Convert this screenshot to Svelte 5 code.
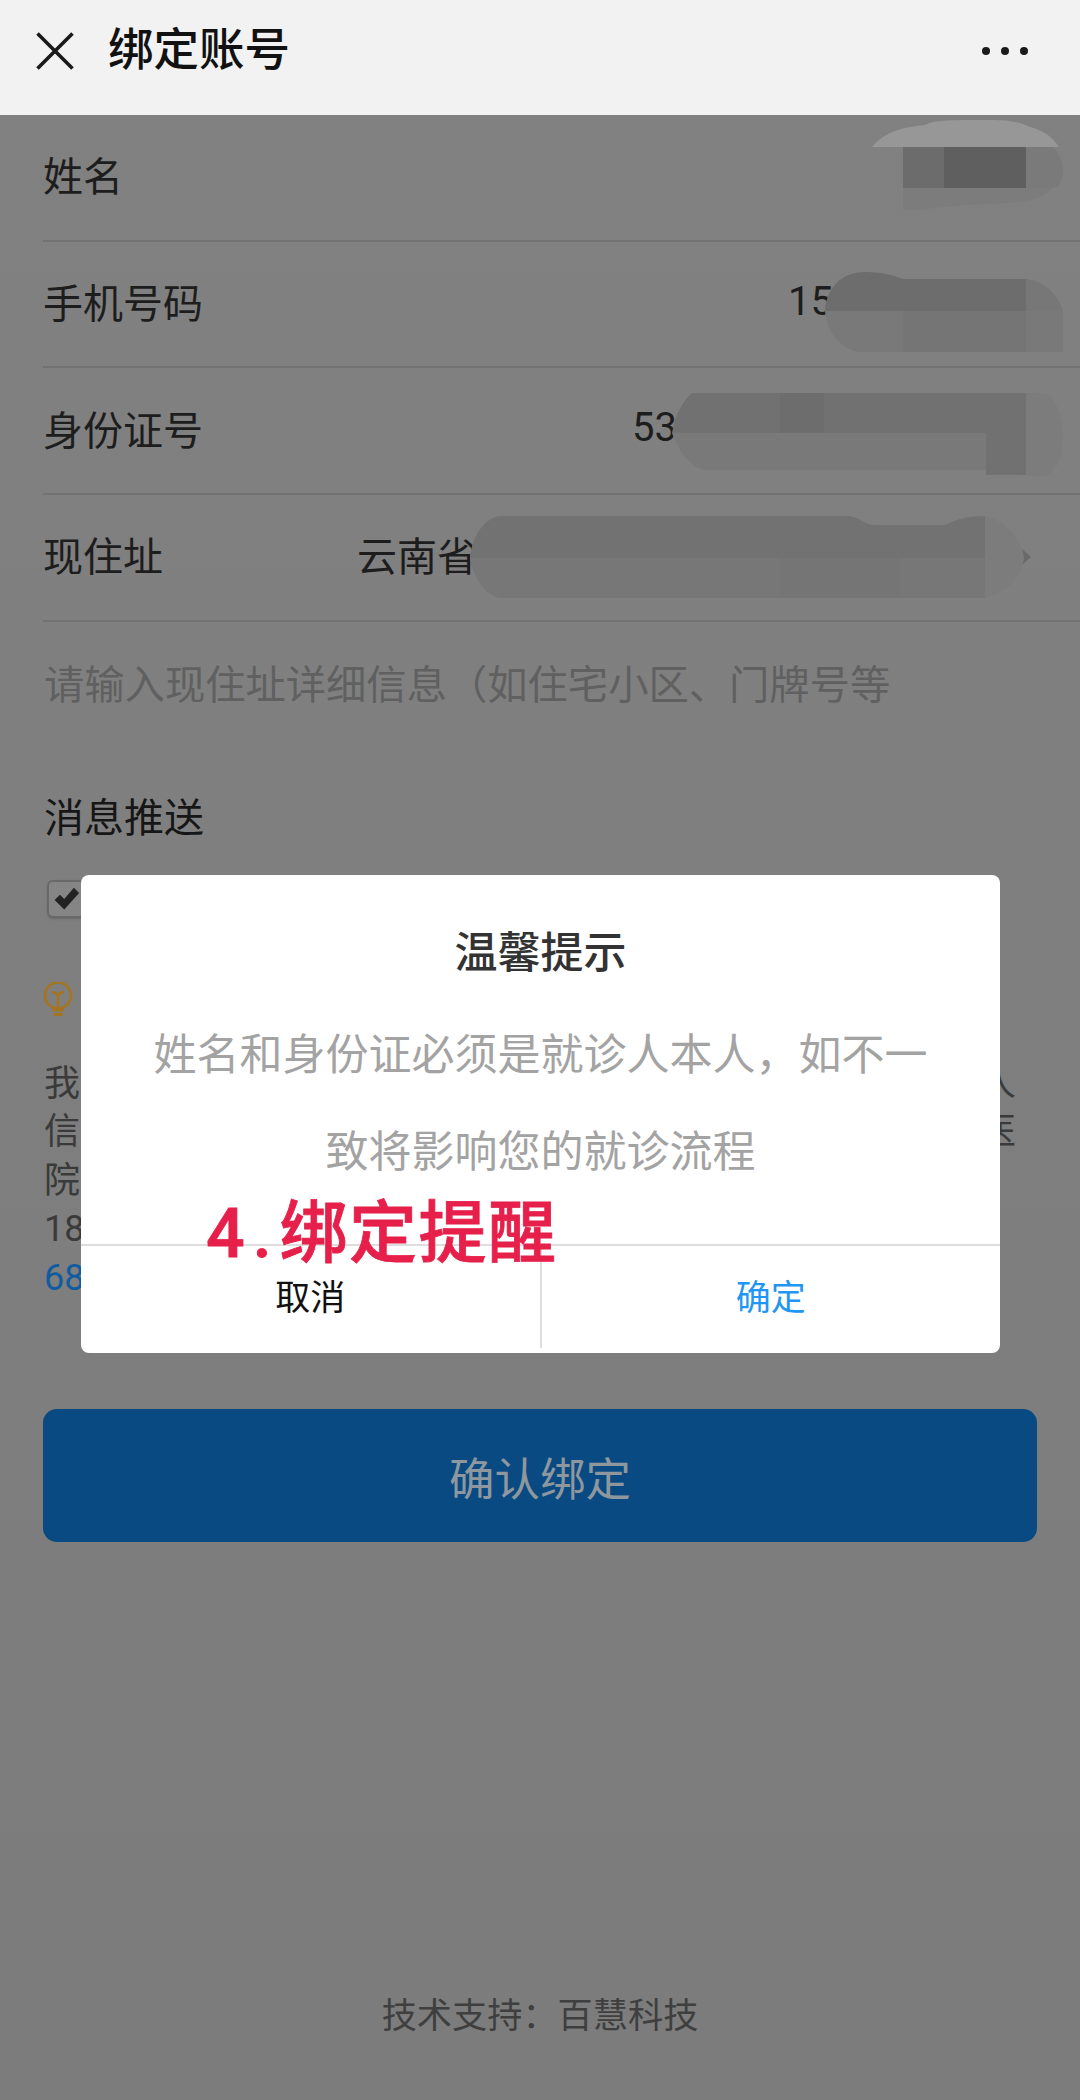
<script>
  const rows = [
    { label: '姓名', value: '', width: 0, cls: 'name' },
    { label: '手机号码', value: '15', width: 247, cls: 'phone' },
    { label: '身份证号', value: '53', width: 403, cls: 'idcard' },
    { label: '现住址', value: '云南省', width: 665, cls: 'addr' }
  ];
</script>

<div class="app">
  <header class="topbar">
    <svg class="close" viewBox="0 0 38 38" aria-hidden="true">
      <path d="M1.5 1.5 36.5 36.5M36.5 1.5 1.5 36.5" />
    </svg>
    <h1>绑定账号</h1>
    <div class="dots"><i></i><i></i><i></i></div>
  </header>

  <main>
    {#each rows as row}
      <div class="row {row.cls}">
        <span class="label">{row.label}</span>
        {#if row.value}
          <span class="value" style="width: {row.width}px">{row.value}</span>
        {/if}
        {#if row.cls === 'addr'}
          <span class="chevron"></span>
        {/if}

        {#if row.cls === 'name'}
          <svg class="mosaic" viewBox="868 118 196 92" aria-hidden="true">
            <path fill="#7c7c7c" d="M903 188H1052C1040 204 1010 202 985 204C960 205 930 208 903 212Z" />
            <path fill="#979797" d="M872 147C885 131 905 127 925 125C935 120 945 120 990 120C1010 120 1020 122 1030 127C1045 131 1052 137 1059 147Z" />
            <rect x="903" y="147" width="41" height="41" fill="#6c6c6c" />
            <rect x="944" y="147" width="82" height="41" fill="#5f5f5f" />
            <path fill="#7a7a7a" d="M1026 147H1052C1060 152 1064 165 1063 175C1062 182 1058 188 1052 188H1026Z" />
          </svg>
        {:else if row.cls === 'phone'}
          <svg class="mosaic" viewBox="820 268 246 88" aria-hidden="true">
            <path fill="#6d6d6d" d="M825 311C826 290 840 272 865 272C885 272 895 276 903 279H1026V311Z" />
            <path fill="#777" d="M1026 279C1045 281 1058 295 1063 311H1026Z" />
            <path fill="#797979" d="M825 311H1063V352H860C840 350 826 330 825 311Z" />
            <rect x="903" y="311" width="123" height="41" fill="#757575" />
          </svg>
        {:else if row.cls === 'idcard'}
          <svg class="mosaic" viewBox="668 390 398 90" aria-hidden="true">
            <path fill="#717171" d="M672 433C675 415 682 402 692 393H1026V433Z" />
            <rect x="780" y="393" width="44" height="40" fill="#6d6d6d" />
            <path fill="#797979" d="M672 433H986V470H705C690 468 678 450 672 433Z" />
            <rect x="986" y="433" width="40" height="42" fill="#717171" />
            <path fill="#7c7c7c" d="M1026 393H1045C1058 400 1063 420 1063 435C1063 455 1058 470 1045 476H1026Z" />
          </svg>
        {:else if row.cls === 'addr'}
          <svg class="mosaic" viewBox="466 512 562 90" aria-hidden="true">
            <path fill="#727272" d="M470 558C472 535 485 518 500 516H850C860 518 865 524 873 525H945C955 520 965 516 985 516V558Z" />
            <path fill="#777" d="M470 558H985V598H500C485 596 472 575 470 558Z" />
            <rect x="780" y="558" width="120" height="40" fill="#757575" />
            <path fill="#7c7c7c" d="M985 516C1005 520 1022 540 1024 558C1022 575 1010 592 985 598Z" />
          </svg>
        {/if}
      </div>
    {/each}

    <div class="placeholder">请输入现住址详细信息（如住宅小区、门牌号等</div>

    <h2>消息推送</h2>

    <div class="checkbox">
      <svg viewBox="0 0 32 32" aria-hidden="true"><path d="M3 17 9 11 14 16 25 3 31 9 14 28Z" /></svg>
    </div>

    <svg class="bulb" viewBox="0 0 30 35" aria-hidden="true">
      <circle cx="15" cy="13.5" r="13" />
      <path d="M9 10c3 0 6 2 6 5 0-3 3-5 6-5M15 14v12" />
      <path class="base" d="M9.500 28h11M10.500 32.500h9" />
    </svg>

    <div class="agreement">
      <p><span>我</span><span>人</span></p>
      <p><span>信</span><span>医</span></p>
      <p><span>院</span></p>
      <p><span>18</span></p>
      <p class="link"><span>68</span></p>
    </div>

    <button class="confirm">确认绑定</button>

    <footer>技术支持：百慧科技</footer>
  </main>

  <div class="dialog">
    <div class="dialog-title">温馨提示</div>
    <div class="dialog-body">姓名和身份证必须是就诊人本人，如不一致将影响您的就诊流程</div>
    <div class="dialog-actions">
      <button>取消</button>
      <button class="ok">确定</button>
    </div>
  </div>

  <div class="note"><span class="num">4.</span>绑定提醒</div>
</div>

<style>
  :global(body) {
    margin: 0;
  }
  .app {
    position: relative;
    width: 1080px;
    height: 2100px;
    overflow: hidden;
    background: linear-gradient(#818181, #7c7c7c);
    font-family: Roboto, "Noto Sans CJK SC", sans-serif;
    color: #1d1d1d;
  }
  .topbar {
    display: flex;
    align-items: center;
    box-sizing: border-box;
    height: 115px;
    padding: 0 52px 14px 36px;
    background: #f2f2f2;
    color: #111;
  }
  .close {
    width: 38px;
    height: 38px;
    margin-right: 34px;
  }
  .close path {
    fill: none;
    stroke: #1a1a1a;
    stroke-width: 3.6;
  }
  h1 {
    margin: 0;
    font-size: 45.5px;
    font-weight: 500;
    line-height: 60px;
  }
  .dots {
    display: flex;
    gap: 11px;
    margin-left: auto;
  }
  .dots i {
    width: 8px;
    height: 8px;
    border-radius: 50%;
    background: #1a1a1a;
  }
  .row {
    position: relative;
    display: flex;
    align-items: center;
    box-sizing: border-box;
    height: 126.7px;
    margin-left: 43px;
    padding: 0 45px 6px 0;
    border-bottom: 2px solid #727272;
    font-size: 40px;
  }
  .value {
    margin-left: auto;
  }
  .addr {
    padding-right: 49px;
  }
  .chevron {
    width: 0;
    height: 0;
    margin-top: 6px;
    border-left: 9px solid #6a6a6a;
    border-top: 8px solid transparent;
    border-bottom: 8px solid transparent;
  }
  .mosaic {
    position: absolute;
  }
  .name .mosaic {
    left: 825px;
    top: 3px;
    width: 196px;
    height: 92px;
  }
  .phone .mosaic {
    left: 777px;
    top: 26.3px;
    width: 246px;
    height: 88px;
  }
  .idcard .mosaic {
    left: 625px;
    top: 21.6px;
    width: 398px;
    height: 90px;
  }
  .addr .mosaic {
    left: 423px;
    top: 16.9px;
    width: 562px;
    height: 90px;
  }
  .placeholder {
    margin-left: 44px;
    height: 127px;
    font-size: 40.3px;
    line-height: 127px;
    color: #606060;
  }
  h2 {
    margin: 40px 0 0 44px;
    font-size: 40px;
    font-weight: 400;
    line-height: 60px;
    color: #161616;
  }
  .checkbox {
    display: flex;
    align-items: center;
    justify-content: center;
    box-sizing: border-box;
    width: 38px;
    height: 38px;
    margin: 31px 0 0 47px;
    border: 2px solid #696969;
    border-radius: 6px;
    background: #858585;
    box-shadow: 0 1px 2px #6a6a6a;
  }
  .checkbox svg {
    width: 28px;
    height: 28px;
  }
  .checkbox path {
    fill: #222;
  }
  .bulb {
    display: block;
    width: 30px;
    height: 35px;
    margin: 64px 0 0 43px;
    fill: none;
    stroke: #a4741f;
    stroke-width: 2.6;
  }
  .bulb .base {
    stroke-width: 3.2;
  }
  .agreement {
    margin: 43px 64px 0 44px;
    font-size: 36px;
    line-height: 48.5px;
    color: #3a3a3a;
  }
  .agreement p {
    display: flex;
    justify-content: space-between;
    margin: 0;
  }
  .link {
    color: #0f5c9e;
  }
  .confirm {
    display: block;
    width: 994px;
    height: 133px;
    margin: 107px 0 0 43px;
    padding: 0;
    border: none;
    border-radius: 14px;
    background: #094a82;
    color: #8e979e;
    font: inherit;
    font-size: 45.5px;
  }
  footer {
    margin-top: 444px;
    font-size: 35.2px;
    line-height: 60px;
    text-align: center;
    color: #3f3f3f;
  }
  .dialog {
    position: absolute;
    left: 81px;
    top: 875px;
    display: flex;
    flex-direction: column;
    box-sizing: border-box;
    width: 919px;
    height: 478px;
    padding-top: 48px;
    border-radius: 8px;
    background: #fff;
    text-align: center;
  }
  .dialog-title {
    font-size: 43px;
    font-weight: 500;
    line-height: 60px;
    color: #333;
  }
  .dialog-body {
    margin-top: 24px;
    padding: 0 60px;
    font-size: 43px;
    line-height: 97px;
    color: #a3a3a3;
  }
  .dialog-actions {
    display: flex;
    box-sizing: border-box;
    margin-top: auto;
    height: 109px;
    padding-bottom: 5px;
    border-top: 2px solid #ddd;
  }
  .dialog-actions button {
    flex: 1;
    padding: 0 0 6px;
    border: none;
    background: none;
    color: #111;
    font: inherit;
    font-size: 35px;
  }
  .dialog-actions .ok {
    border-left: 2px solid #ddd;
    color: #2196f3;
  }
  .note {
    position: absolute;
    left: 206px;
    top: 1189px;
    font-size: 68px;
    font-weight: 500;
    line-height: 90px;
    letter-spacing: 1.5px;
    color: #e6204a;
    -webkit-text-stroke: 0.8px #e6204a;
    white-space: nowrap;
  }
  .num {
    letter-spacing: 8px;
  }
</style>
